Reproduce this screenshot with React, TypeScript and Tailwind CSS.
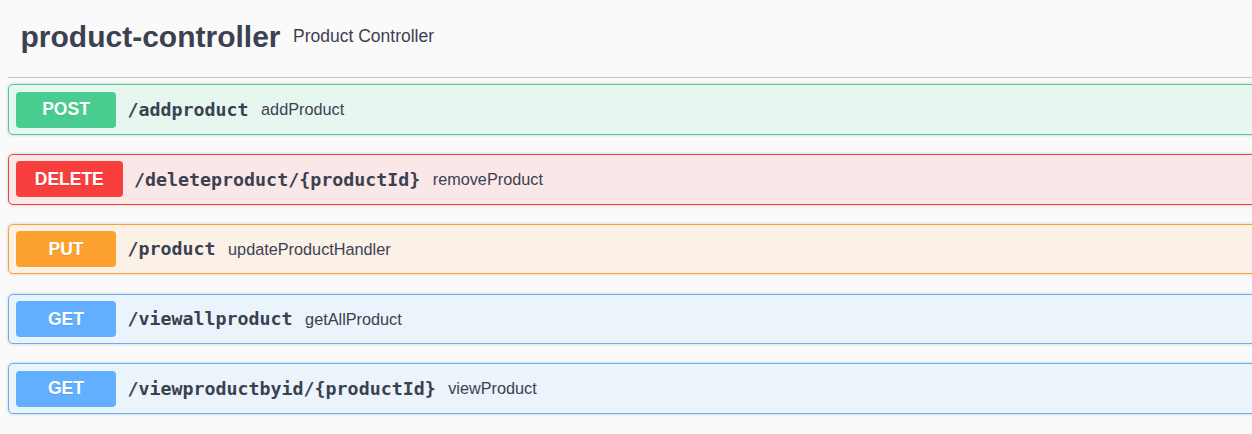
import React from 'react'

type Op = {
  method: 'POST' | 'DELETE' | 'PUT' | 'GET'
  path: string
  summary: string
}

const ops: Op[] = [
  { method: 'POST', path: '/addproduct', summary: 'addProduct' },
  { method: 'DELETE', path: '/deleteproduct/{productId}', summary: 'removeProduct' },
  { method: 'PUT', path: '/product', summary: 'updateProductHandler' },
  { method: 'GET', path: '/viewallproduct', summary: 'getAllProduct' },
  { method: 'GET', path: '/viewproductbyid/{productId}', summary: 'viewProduct' },
]

const styles = {
  POST: { block: 'border-[#49cc90] bg-[#e8f6f0]', badge: 'bg-[#49cc90]' },
  DELETE: { block: 'border-[#f93e3e] bg-[#fae7e7]', badge: 'bg-[#f93e3e]' },
  PUT: { block: 'border-[#fca130] bg-[#fbf1e6]', badge: 'bg-[#fca130]' },
  GET: { block: 'border-[#61affe] bg-[#ebf3fb]', badge: 'bg-[#61affe]' },
}

const OpBlock = ({ op }: { op: Op }) => {
  const s = styles[op.method]
  return (
    <div
      className={`mb-[19.25px] rounded-[5px] border shadow-[0_0_3.75px_rgba(0,0,0,0.19)] ${s.block}`}
    >
      <div className="flex items-center px-[7px] py-[6.25px]">
        <span
          className={`flex h-[36px] min-w-[100px] items-center justify-center rounded-[3.75px] px-[18.75px] text-[17.5px] font-bold text-white [text-shadow:0_1px_0_rgba(0,0,0,0.1)] ${s.badge}`}
        >
          {op.method}
        </span>
        <span className="pl-[11.5px] pr-[12.5px] font-['DejaVu_Sans_Mono',monospace] text-[18.3px] font-bold text-[#3b4151]">
          {op.path}
        </span>
        <span className="text-[16.25px] text-[#3b4151]">{op.summary}</span>
      </div>
    </div>
  )
}

export default function App() {
  return (
    <div className="h-[434px] w-full overflow-hidden bg-[#fafafa] font-['Liberation_Sans',Arial,sans-serif] text-[#3b4151]">
      <div className="w-[1290px] pl-[8px] pt-[1px]">
        <h4 className="mb-[6.25px] flex items-center border-b border-[#c4c6cb] pb-[18.5px] pl-[12.5px] pt-[12.5px] text-[30px] font-bold">
          product-controller
          <small className="px-[12.5px] text-[17.5px] font-normal">Product Controller</small>
        </h4>
        {ops.map((op) => (
          <OpBlock key={op.path} op={op} />
        ))}
      </div>
    </div>
  )
}
